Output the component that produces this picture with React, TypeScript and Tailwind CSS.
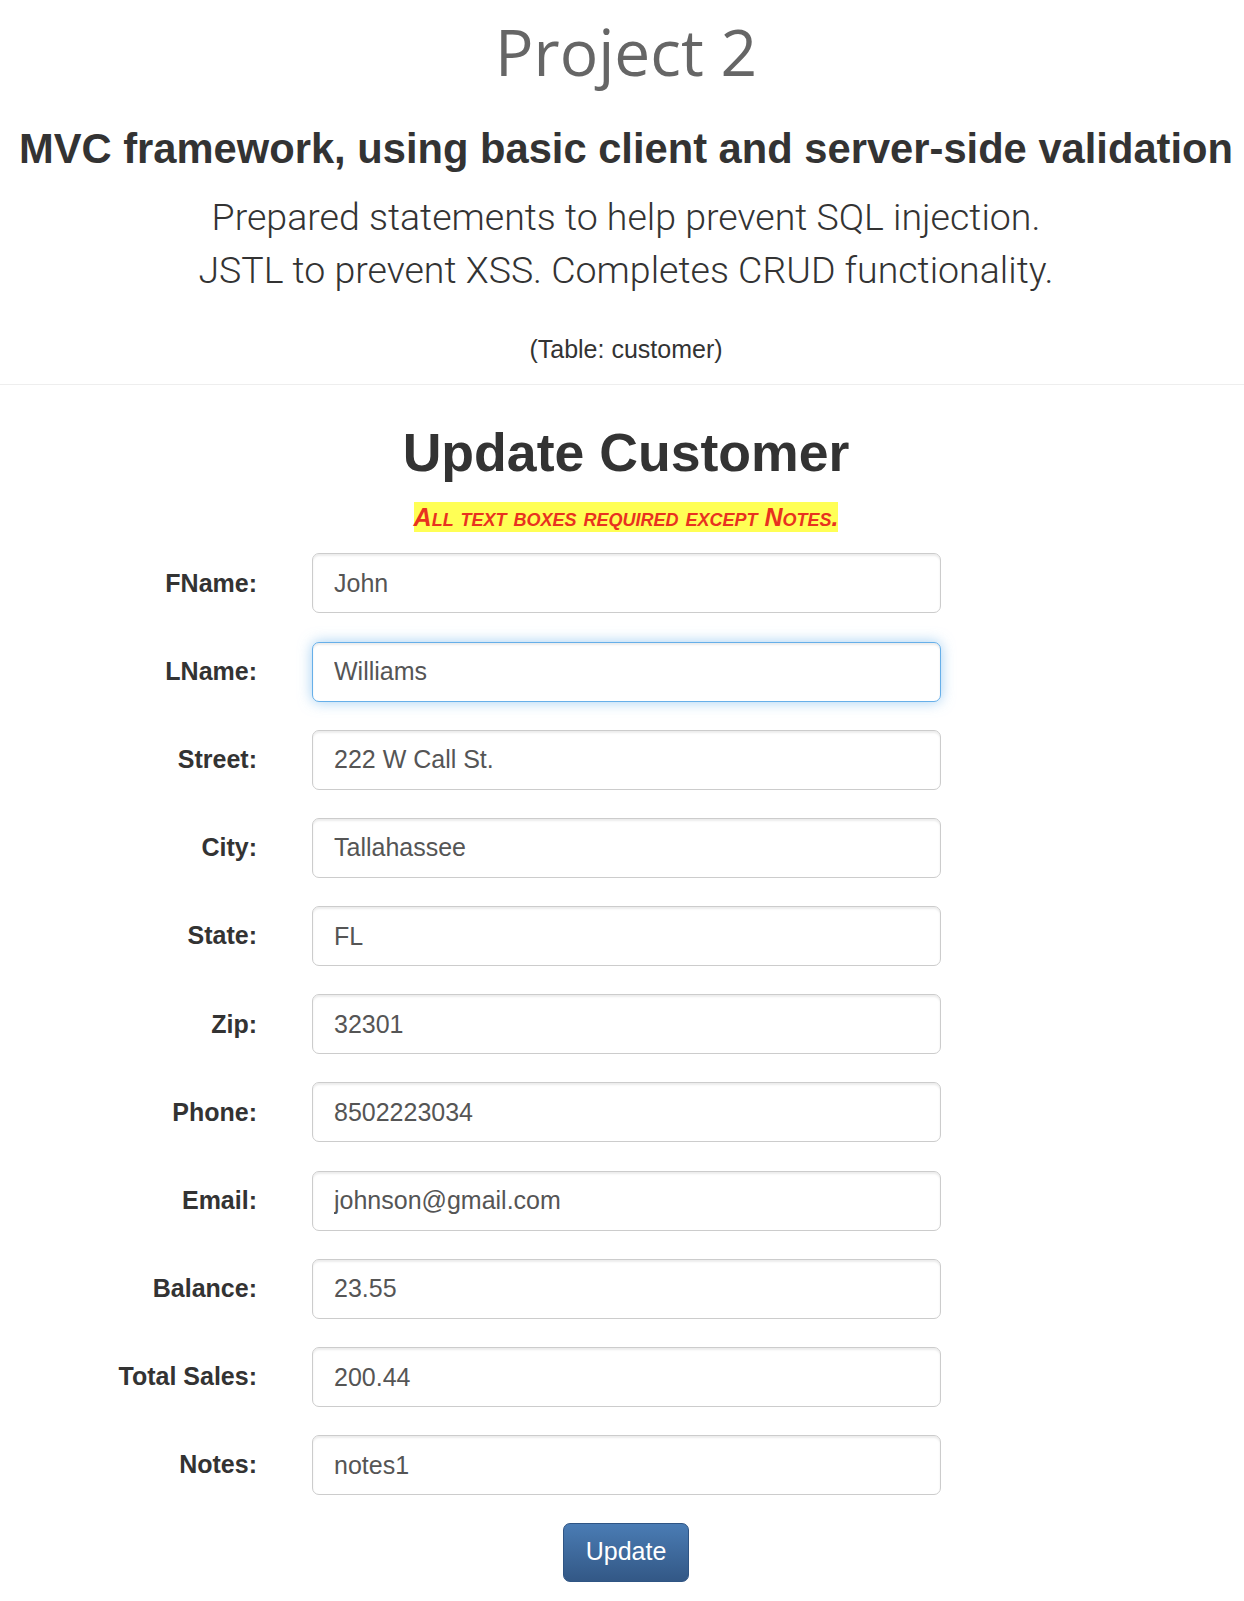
import React from 'react'

// customer record being edited
const fields = [
  { id: 'fname', label: 'FName:', value: 'John' },
  { id: 'lname', label: 'LName:', value: 'Williams', focused: true },
  { id: 'street', label: 'Street:', value: '222 W Call St.' },
  { id: 'city', label: 'City:', value: 'Tallahassee' },
  { id: 'state', label: 'State:', value: 'FL' },
  { id: 'zip', label: 'Zip:', value: '32301' },
  { id: 'phone', label: 'Phone:', value: '8502223034' },
  { id: 'email', label: 'Email:', value: 'johnson@gmail.com' },
  { id: 'balance', label: 'Balance:', value: '23.55' },
  { id: 'total_sales', label: 'Total Sales:', value: '200.44' },
  { id: 'notes', label: 'Notes:', value: 'notes1' },
]

export default function App() {
  return (
    <div className="min-h-[1601px] bg-white pl-2 font-['Liberation_Sans',Arial,sans-serif] text-[#333]">
      {/* Page header */}
      <div className="text-center">
        <h1 className="pt-[17px] font-['Open_Sans',sans-serif] text-[64px] leading-[1.1] text-[#666]">
          Project 2
        </h1>
        <h3 className="mt-[39px] whitespace-nowrap text-[41.7px] font-bold leading-[1.1]">
          MVC framework, using basic client and server-side validation
        </h3>
        <p className="mt-[18.5px] font-['Roboto',sans-serif] text-[37.5px] font-light leading-[1.4286]">
          Prepared statements to help prevent SQL injection.
          <br />
          JSTL to prevent XSS. Completes CRUD functionality.
        </p>
        <p className="mt-[34px] text-[25px] leading-[1.4286]">(Table: customer)</p>
      </div>

      <hr className="-ml-2 mt-[16.8px] border-t border-[#eee]" />

      {/* Update form */}
      <div>
        <h2 className="mt-[38px] text-center text-[53.6px] font-bold leading-[1.1]">
          Update Customer
        </h2>
        <div className="mt-[20px] text-center">
          <span className="inline-block bg-[#ffff55] text-[25px] font-bold italic leading-[30px] text-[#e8321f] [font-variant:small-caps]">
            All text boxes required except Notes.
          </span>
        </div>

        <form className="mt-[20px] flex flex-col gap-[28.2px]" onSubmit={(e) => e.preventDefault()}>
          {fields.map((f) => (
            <div key={f.id} className="flex items-center">
              <label htmlFor={f.id} className="w-[249px] shrink-0 text-right text-[25px] font-bold">
                {f.label}
              </label>
              <input
                id={f.id}
                name={f.id}
                type="text"
                defaultValue={f.value}
                className={`ml-[54.6px] h-[60px] w-[629.5px] rounded-[7px] border bg-white px-[21.4px] text-[25px] text-[#555] outline-none ${
                  f.focused
                    ? 'border-[#66afe9] shadow-[inset_0_2px_2px_rgba(0,0,0,0.075),0_0_14px_rgba(102,175,233,0.6)]'
                    : 'border-[#ccc] shadow-[inset_0_2px_2px_rgba(0,0,0,0.075)]'
                }`}
              />
            </div>
          ))}

          <div className="flex justify-center">
            <button
              type="submit"
              className="-mt-[0.7px] rounded-[7px] border border-[#2f5584] bg-gradient-to-b from-[#4a7cb4] to-[#335886] px-[21.4px] py-[10.7px] text-[25px] leading-[1.4286] text-white"
            >
              Update
            </button>
          </div>
        </form>
      </div>
    </div>
  )
}
